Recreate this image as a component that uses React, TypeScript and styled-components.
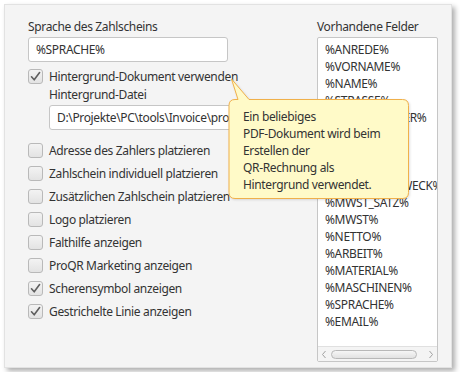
import styled, { createGlobalStyle } from "styled-components";

const GlobalStyle = createGlobalStyle`
  html, body {
    margin: 0;
    padding: 0;
    background: #ffffff;
  }
  body {
    font-family: "Noto Sans", "Open Sans", sans-serif;
    font-size: 12px;
    letter-spacing: -0.35px;
    color: #333333;
  }
`;

const Panel = styled.div`
  position: relative;
  margin: 4px;
  width: 448px;
  height: 364px;
  box-sizing: border-box;
  background: #f4f4f4;
  border: 1px solid #e2e2e2;
  box-shadow: 3px 3px 5px rgba(0, 0, 0, 0.32);
  padding: 13px 13px 0 23px;
  display: grid;
  grid-template-columns: 272px 121px;
  column-gap: 17px;
  align-items: start;
`;

const Column = styled.div`
  display: flex;
  flex-direction: column;
`;

const Label = styled.div<{ $indent?: boolean; $top?: number }>`
  line-height: 17px;
  margin-left: ${(p) => (p.$indent ? "21px" : "0")};
  margin-top: ${(p) => p.$top ?? 0}px;
  margin-bottom: 2px;
  white-space: nowrap;
`;

const Field = styled.div<{ $width: number; $indent?: boolean }>`
  box-sizing: border-box;
  width: ${(p) => p.$width}px;
  height: 25px;
  margin-left: ${(p) => (p.$indent ? "21px" : "0")};
  background: #ffffff;
  border: 1px solid #c6c6c6;
  border-radius: 3px;
  padding-left: 7px;
  display: flex;
  align-items: center;
  white-space: nowrap;
  overflow: hidden;
`;

const CheckList = styled.div`
  display: flex;
  flex-direction: column;
  gap: 8px;
  margin-top: 13px;
`;

const Row = styled.label<{ $top?: number }>`
  display: flex;
  align-items: center;
  gap: 6px;
  height: 15px;
  margin-top: ${(p) => p.$top ?? 0}px;
  white-space: nowrap;
`;

const Box = styled.span`
  box-sizing: border-box;
  width: 15px;
  height: 15px;
  flex: none;
  border: 1px solid #b9b9b9;
  border-radius: 3px;
  background: linear-gradient(#f3f3f3, #e3e3e3);
  display: flex;
  align-items: center;
  justify-content: center;
`;

const ListBox = styled.div`
  box-sizing: border-box;
  height: 325px;
  background: #ffffff;
  border: 1px solid #c6c6c6;
  border-radius: 2px;
  display: flex;
  flex-direction: column;
  overflow: hidden;
`;

const Items = styled.div`
  flex: 1;
  padding: 3px 0 0 7px;
  overflow: hidden;
`;

const Item = styled.div`
  line-height: 17px;
  white-space: nowrap;
`;

const HScroll = styled.div`
  height: 14px;
  flex: none;
  border-top: 1px solid #e0e0e0;
  background: #f4f4f4;
  display: flex;
  align-items: center;
  padding: 0 3px;
  gap: 4px;
`;

const Arrow = styled.svg`
  flex: none;
`;

const Thumb = styled.div`
  box-sizing: border-box;
  height: 9px;
  width: 86px;
  border: 1px solid #b8b8b8;
  border-radius: 5px;
  background: linear-gradient(#f6f6f6, #e2e2e2);
`;

const Track = styled.div`
  flex: 1;
`;

const Tooltip = styled.div`
  position: absolute;
  left: 223px;
  top: 73px;
  width: 182px;
  height: 122px;
`;

const Bubble = styled.svg`
  position: absolute;
  left: 0;
  top: 0;
  filter: drop-shadow(1px 1px 1px rgba(0, 0, 0, 0.12));
`;

const TipText = styled.div`
  position: relative;
  padding: 30px 0 0 15px;
  line-height: 17px;
  color: #333333;
`;

const Check = () => (
  <svg width="13" height="13" viewBox="0 0 13 13">
    <path
      d="M2.5 6.8 L5.2 9.8 L10.6 2.6"
      fill="none"
      stroke="#5e5e5e"
      strokeWidth="1.6"
      strokeLinecap="round"
      strokeLinejoin="round"
    />
  </svg>
);

function CheckBox({ checked, text, top }: { checked?: boolean; text: string; top?: number }) {
  return (
    <Row $top={top}>
      <Box>{checked && <Check />}</Box>
      {text}
    </Row>
  );
}

const fields = [
  "%ANREDE%",
  "%VORNAME%",
  "%NAME%",
  "%STRASSE%",
  "%HAUSNUMMER%",
  "%PLZ%",
  "%ORT%",
  "%BETRAG%",
  "%ZAHLUNGSZWECK%",
  "%MWST_SATZ%",
  "%MWST%",
  "%NETTO%",
  "%ARBEIT%",
  "%MATERIAL%",
  "%MASCHINEN%",
  "%SPRACHE%",
  "%EMAIL%",
];

const options: [string, boolean][] = [
  ["Adresse des Zahlers platzieren", false],
  ["Zahlschein individuell platzieren", false],
  ["Zusätzlichen Zahlschein platzieren", false],
  ["Logo platzieren", false],
  ["Falthilfe anzeigen", false],
  ["ProQR Marketing anzeigen", false],
  ["Scherensymbol anzeigen", true],
  ["Gestrichelte Linie anzeigen", true],
];

export default function App() {
  return (
    <>
      <GlobalStyle />
      <Panel>
        <Column>
          <Label>Sprache des Zahlscheins</Label>
          <Field $width={200}>%SPRACHE%</Field>
          <CheckBox checked text="Hintergrund-Dokument verwenden" top={7} />
          <Label $indent $top={2}>
            Hintergrund-Datei
          </Label>
          <Field $width={251} $indent>
            D:\Projekte\PC\tools\Invoice\proqr\hintergrund.pdf
          </Field>
          <CheckList>
            {options.map(([text, checked]) => (
              <CheckBox key={text} text={text} checked={checked} />
            ))}
          </CheckList>
        </Column>
        <Column>
          <Label>Vorhandene Felder</Label>
          <ListBox>
            <Items>
              {fields.map((f) => (
                <Item key={f}>{f}</Item>
              ))}
            </Items>
            <HScroll>
              <Arrow width="6" height="9" viewBox="0 0 6 9">
                <path d="M4.5 1 L1.5 4.5 L4.5 8" fill="none" stroke="#a0a0a0" strokeWidth="1" />
              </Arrow>
              <Thumb />
              <Track />
              <Arrow width="6" height="9" viewBox="0 0 6 9">
                <path d="M1.5 1 L4.5 4.5 L1.5 8" fill="none" stroke="#a0a0a0" strokeWidth="1" />
              </Arrow>
            </HScroll>
          </ListBox>
        </Column>
        <Tooltip>
          <Bubble width="182" height="122" viewBox="0 0 182 122">
            <path
              d="M7 21.5 H10 L3.5 1 L21 21.5 H174.5 Q180.5 21.5 180.5 27.5 V114.5 Q180.5 120.5 174.5 120.5 H7 Q1 120.5 1 114.5 V27.5 Q1 21.5 7 21.5 Z"
              fill="#fffac8"
              stroke="#f0b04a"
              strokeWidth="1"
            />
          </Bubble>
          <TipText>
            Ein beliebiges
            <br />
            PDF-Dokument wird beim
            <br />
            Erstellen der
            <br />
            QR-Rechnung als
            <br />
            Hintergrund verwendet.
          </TipText>
        </Tooltip>
      </Panel>
    </>
  );
}
